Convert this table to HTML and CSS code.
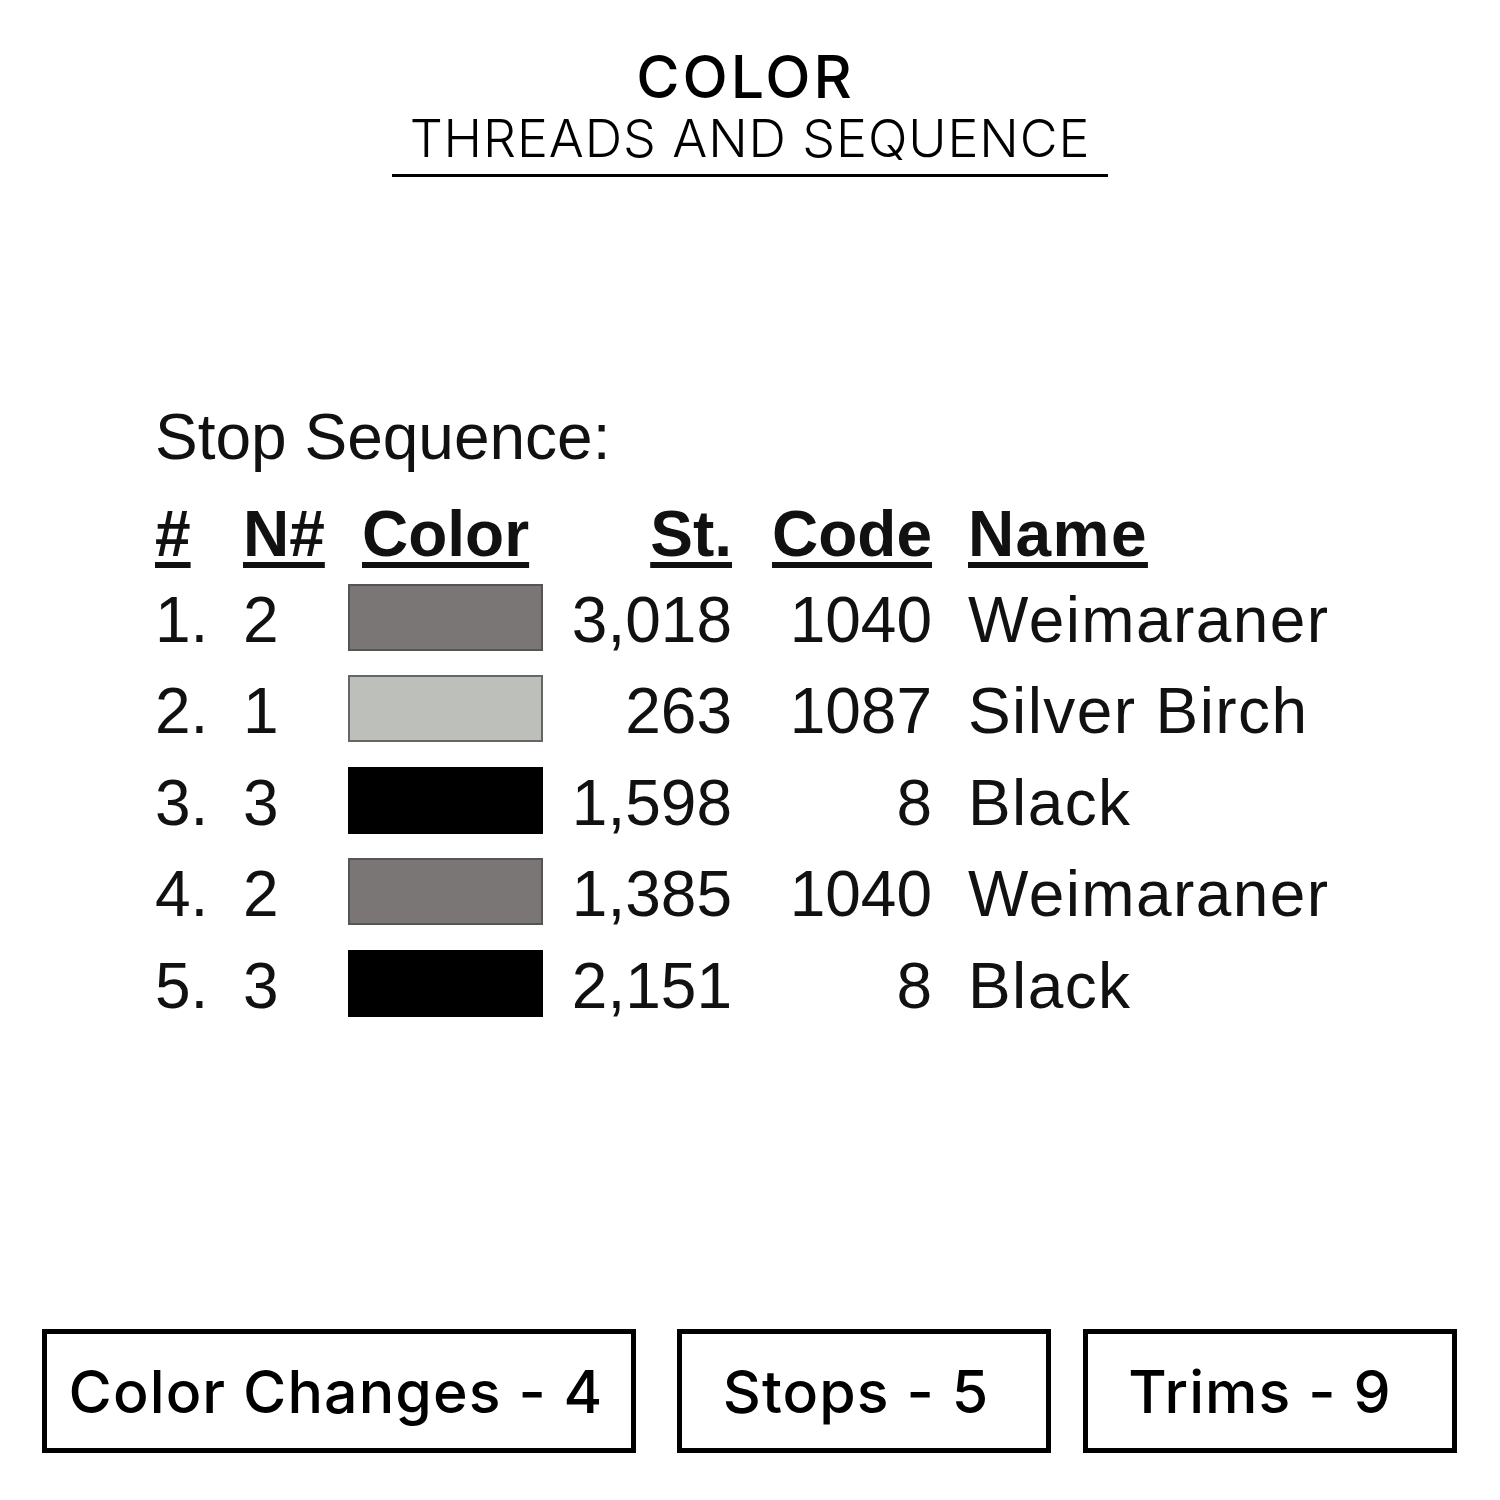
FILE: index.html
```html
<!DOCTYPE html>
<html>
<head>
<meta charset="utf-8">
<link rel="stylesheet" href="styles.css">
</head>
<body>
<div class="page">
  <header class="head">
    <div class="title">COLOR</div>
    <div class="subtitle">THREADS AND SEQUENCE</div>
  </header>

  <section class="seq">
    <div class="seq-title">Stop Sequence:</div>
    <div class="grid">
      <div class="h c1"><span>#</span></div>
      <div class="h c2"><span>N#</span></div>
      <div class="h c3"><span>Color</span></div>
      <div class="h c4"><span>St.</span></div>
      <div class="h c5"><span>Code</span></div>
      <div class="h c6"><span>Name</span></div>

      <div class="c1">1.</div><div class="c2">2</div><div class="c3"><div class="sw gray"></div></div><div class="c4">3,018</div><div class="c5">1040</div><div class="c6">Weimaraner</div>
      <div class="c1">2.</div><div class="c2">1</div><div class="c3"><div class="sw light"></div></div><div class="c4">263</div><div class="c5">1087</div><div class="c6">Silver Birch</div>
      <div class="c1">3.</div><div class="c2">3</div><div class="c3"><div class="sw black"></div></div><div class="c4">1,598</div><div class="c5">8</div><div class="c6">Black</div>
      <div class="c1">4.</div><div class="c2">2</div><div class="c3"><div class="sw gray"></div></div><div class="c4">1,385</div><div class="c5">1040</div><div class="c6">Weimaraner</div>
      <div class="c1">5.</div><div class="c2">3</div><div class="c3"><div class="sw black"></div></div><div class="c4">2,151</div><div class="c5">8</div><div class="c6">Black</div>
    </div>
  </section>

  <footer class="stats">
    <div class="box wide">Color Changes - 4</div>
    <div class="box mid">Stops - 5</div>
    <div class="box last">Trims - 9</div>
  </footer>
</div>
</body>
</html>
```
FILE: styles.css
```css
html, body {
  margin: 0;
  padding: 0;
  background: #fff;
}
.page {
  width: 1500px;
  height: 1500px;
  display: flex;
  flex-direction: column;
  color: #000;
}
.head {
  display: flex;
  flex-direction: column;
  align-items: center;
  padding-top: 47px;
  font-family: Inter, "Open Sans", sans-serif;
}
.title {
  font-size: 59px;
  line-height: 59px;
  font-weight: 500;
  letter-spacing: 3px;
  padding-right: 9px;
}
.subtitle {
  margin-top: 7px;
  font-size: 52px;
  line-height: 52px;
  font-weight: 300;
  letter-spacing: 0.9px;
  padding: 0 18px 9px;
  border-bottom: 3px solid #000;
}
.seq {
  margin-top: 228px;
  margin-left: 155px;
  font-family: "Liberation Sans", Arial, sans-serif;
  font-size: 64px;
  color: #111;
}
.seq-title {
  line-height: 64px;
}
.grid {
  margin-top: 25px;
  display: grid;
  grid-template-columns: 88px 105px 195px 189px 200px auto;
  grid-template-rows: 80px repeat(5, 91.5px);
  align-items: center;
  line-height: 64px;
}
.h {
  font-weight: bold;
}
.h span {
  text-decoration: underline;
  text-decoration-thickness: 6px;
  text-underline-offset: 6px;
}
.h.c3 { padding-left: 14px; }
.c4, .c5 { text-align: right; }
.c6 { padding-left: 36px; white-space: nowrap; letter-spacing: 1.4px; }
.sw {
  width: 195px;
  height: 67px;
  box-sizing: border-box;
  border: 2px solid #555;
  margin-top: -5px;
}
.sw.gray { background: #7a7675; }
.sw.light { background: #bcbfba; border-color: #666; }
.sw.black { background: #000; border-color: #000; }

.stats {
  margin-top: auto;
  margin-bottom: 47px;
  margin-left: 42px;
  display: flex;
  font-family: Inter, "Open Sans", sans-serif;
  font-weight: 500;
  font-size: 59px;
  letter-spacing: 1.1px;
}
.box {
  box-sizing: border-box;
  height: 124px;
  border: 5px solid #000;
  display: flex;
  align-items: center;
  justify-content: center;
}
.box.wide { width: 594px; padding-right: 6px; }
.box.mid { width: 374px; margin-left: 41px; padding-right: 16px; }
.box.last { width: 374px; margin-left: 32px; padding-right: 20px; }
```
